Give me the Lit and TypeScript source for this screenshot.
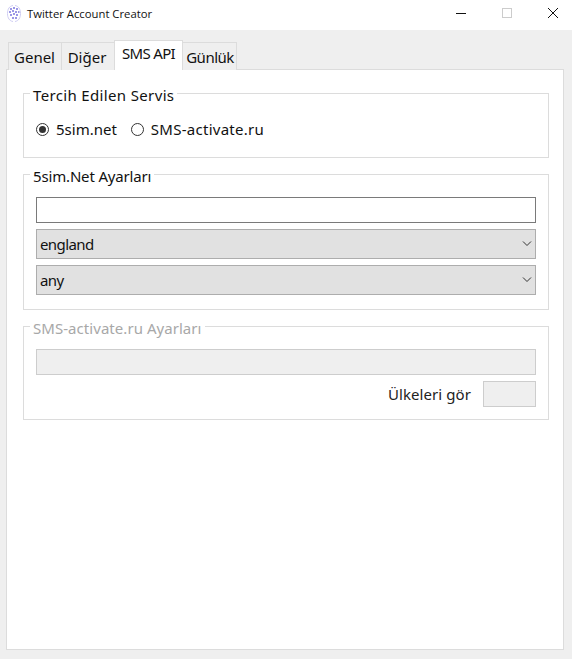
import { LitElement, html, css } from "lit";
import { customElement } from "lit/decorators.js";

@customElement("app-root")
export class AppRoot extends LitElement {
  static styles = css`
    :host { display: block; width: 572px; height: 659px; background: #efefef; overflow: hidden;
      font-family: "Noto Sans", "DejaVu Sans", sans-serif; font-size: 15px; color: #111; }
    * { box-sizing: border-box; }
    .titlebar { height: 30px; background: #fff; display: flex; align-items: center; }
    .appicon { width: 14px; height: 17px; margin-left: 7px; flex: none; position: relative; top: -2px; }
    .title { margin-left: 6px; font: 11.3px/16px "Open Sans", "Noto Sans", sans-serif; color: #111; flex: 1; position: relative; top: -1px; }
    .win { width: 46px; height: 30px; display: flex; align-items: center; justify-content: center; flex: none; position: relative; top: -2px; }
    .win svg { width: 12px; height: 12px; display: block; }
    .wins { display: flex; margin-right: -4px; }
    .content { padding: 10px 8px 9px 6px; height: 629px; display: flex; flex-direction: column; }
    .tabs { display: flex; height: 30px; padding-left: 2px; position: relative; z-index: 1; margin-bottom: -1px; }
    .tab { height: 28px; margin-top: 2px; border: 1px solid #dcdcdc; border-bottom: 0; background: #efefef; margin-right: -1px;
      display: flex; justify-content: center; align-items: center; line-height: 20px; }
    .tab.active { height: 30px; margin-top: 0; background: #fff; position: relative; z-index: 2; padding-bottom: 5px; border-color: #dcdcdc; margin-right: -1px; letter-spacing: -.7px; }
    .genel { width: 54px; padding-right: 1px; } .diger { width: 54px; padding-right: 2px; } .sms { width: 69px; } .gunluk { width: 55px; padding-left: 1px; letter-spacing: -.5px; }
    .panel { flex: 1; background: #fff; border: 1px solid #dcdcdc; padding: 13px 14px 0 16px; display: flex; flex-direction: column; gap: 6px; }
    fieldset { margin: 0; padding: 0 12px 0 12px; border: 1px solid #dcdcdc; min-width: 0; }
    legend { margin-left: -6px; padding: 0 3px; line-height: 24px; height: 20px; white-space: nowrap; }
    .g1 { height: 75px; }
    .g1 legend { letter-spacing: .35px; }
    .g2 { height: 146px; }
    .g2 legend { letter-spacing: -.16px; }
    .g3 { height: 104px; }
    .g3 legend { color: #a8a8a8; letter-spacing: .05px; }
    .radios { display: flex; align-items: center; margin-top: 16px; height: 20px; line-height: 20px; }
    .radio { width: 13px; height: 13px; border-radius: 50%; border: 1px solid #333; display: flex; align-items: center; justify-content: center; flex: none; margin-right: 7px; }
    .radio.on::after { content: ""; width: 7px; height: 7px; border-radius: 50%; background: #333; }
    .r2 { margin-left: 14px; }
    .wide { letter-spacing: .27px; }
    .text { height: 26px; border: 1px solid #7a7a7a; background: #fff; margin-top: 13px; }
    .combo { height: 30px; border: 1px solid #adadad; background: #e1e1e1; margin-top: 6px; display: flex; align-items: center; justify-content: space-between; padding: 0 3px 0 3px; line-height: 20px; letter-spacing: -.6px; }
    .combo svg { width: 10px; height: 6px; display: block; }
    .dis { height: 26px; border: 1px solid #cdcdcd; background: #efefef; margin-top: 13px; }
    .row { display: flex; justify-content: flex-end; align-items: center; margin-top: 6px; height: 26px; }
    .lbl { margin-right: 12px; color: #222; letter-spacing: .08px; }
    .btn { width: 53px; height: 26px; border: 1px solid #cdcdcd; background: #efefef; }
  `;

  render() {
    return html`
      <div class="titlebar">
        <svg class="appicon" viewBox="0 0 14 17" fill="none">
          <path d="M6 .5C2.500 1 .5 4 .5 8.500S2.500 16 6 16.500" stroke="#cfcdf3"/>
          <path d="M8 .5c3.500.5 5.500 3.500 5.500 8S11.500 16 8 16.500" stroke="#cfcdf3"/>
          <path d="M3 3h2v2H3zM6 2h2v2H6zM9 3h2v2H9zM2 6h2v2H2zM5 5h2v2H5zM8 6h2v2H8zM11 6h1.500v2H11zM3 9h2v2H3zM6 8h2v2H6zM9 9h2v2H9zM5 12h2v2H5zM8 12h2v2H8z" fill="#9c97e6"/>
        </svg>
        <div class="title">Twitter Account Creator</div>
        <div class="wins">
          <div class="win"><svg viewBox="0 0 12 12"><path d="M1 6.500h10" stroke="#111"/></svg></div>
          <div class="win"><svg viewBox="0 0 12 12"><rect x="1.500" y="1.500" width="9" height="9" fill="none" stroke="#ccc"/></svg></div>
          <div class="win"><svg viewBox="0 0 12 12"><path d="M1 1l10 10M11 1L1 11" stroke="#111" fill="none"/></svg></div>
        </div>
      </div>
      <div class="content">
        <div class="tabs">
          <div class="tab genel">Genel</div>
          <div class="tab diger">Diğer</div>
          <div class="tab active sms">SMS API</div>
          <div class="tab gunluk">Günlük</div>
        </div>
        <div class="panel">
          <fieldset class="g1">
            <legend>Tercih Edilen Servis</legend>
            <div class="radios">
              <span class="radio on"></span><span>5sim.net</span>
              <span class="radio r2"></span><span class="wide">SMS-activate.ru</span>
            </div>
          </fieldset>
          <fieldset class="g2">
            <legend>5sim.Net Ayarları</legend>
            <div class="text"></div>
            <div class="combo"><span>england</span>${this.chev()}</div>
            <div class="combo"><span>any</span>${this.chev()}</div>
          </fieldset>
          <fieldset class="g3">
            <legend>SMS-activate.ru Ayarları</legend>
            <div class="dis"></div>
            <div class="row"><span class="lbl">Ülkeleri gör</span><div class="btn"></div></div>
          </fieldset>
        </div>
      </div>
    `;
  }

  private chev() {
    return html`<svg viewBox="0 0 10 6"><path d="M1 .5L5 4.500 9 .5" fill="none" stroke="#333"/></svg>`;
  }
}
